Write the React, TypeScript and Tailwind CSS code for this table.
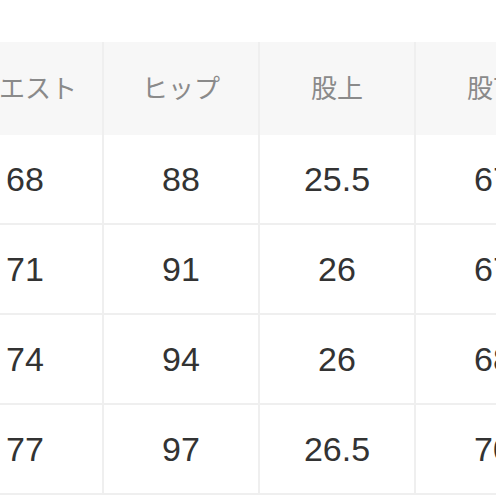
const header = ["ウエスト", "ヒップ", "股上", "股下"];

const rows = [
  ["68", "88", "25.5", "67"],
  ["71", "91", "26", "67"],
  ["74", "94", "26", "68"],
  ["77", "97", "26.5", "70"],
];

export default function App() {
  return (
    <div className="w-[496px] h-[496px] overflow-hidden bg-white">
      <div
        className="ml-[-52px] mt-[42px] w-[624px]"
        style={{ fontFamily: '"Liberation Sans", "Noto Sans CJK JP", sans-serif' }}
      >
        <div className="grid grid-cols-[repeat(4,156px)] h-[93px] bg-[#f7f7f7]">
          {header.map((h, i) => (
            <div
              key={i}
              className="flex items-center justify-center pb-[5px] border-r-2 border-[#efefef] text-[26px] text-[#8a8a8a]"
              style={{ fontFamily: '"Noto Sans CJK JP", sans-serif' }}
            >
              {h}
            </div>
          ))}
        </div>
        {rows.map((r, i) => (
          <div key={i} className="grid grid-cols-[repeat(4,156px)] h-[90px] border-b-2 border-[#efefef]">
            {r.map((c, j) => (
              <div
                key={j}
                className="flex items-center justify-center border-r-2 border-[#efefef] text-[34px] text-[#333333]"
              >
                {c}
              </div>
            ))}
          </div>
        ))}
      </div>
    </div>
  );
}
